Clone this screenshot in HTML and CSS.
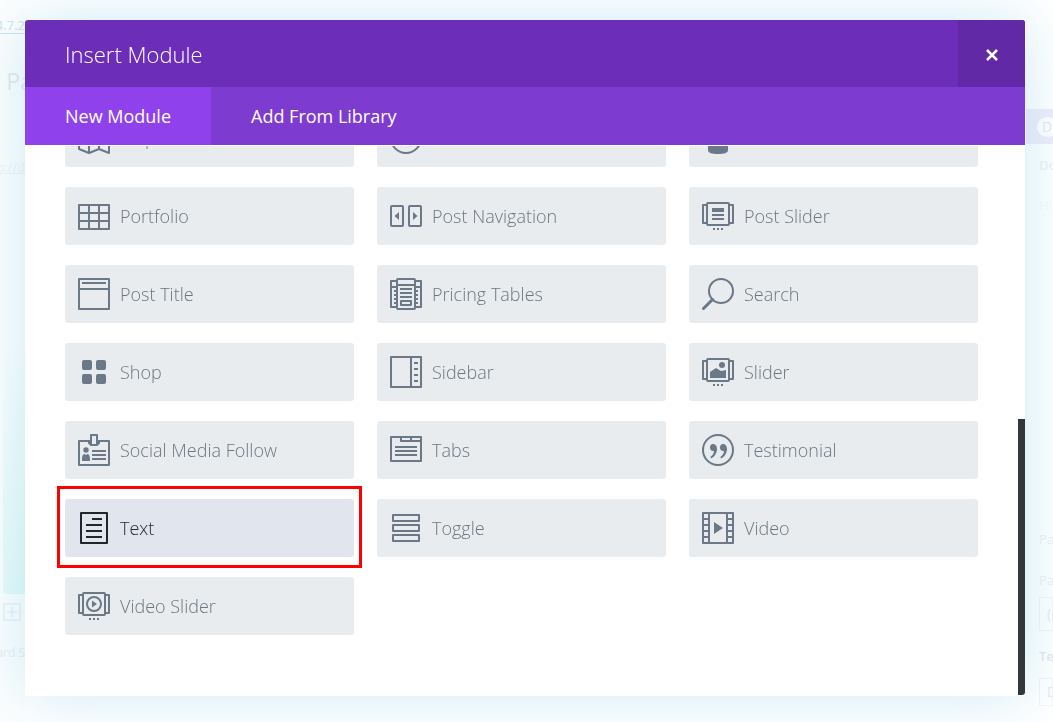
FILE: index.html
```html
<!DOCTYPE html>
<html lang="en">
<head>
<meta charset="utf-8">
<title>Insert Module</title>
<link rel="stylesheet" href="styles.css">
</head>
<body>
<div class="page" aria-hidden="true">
  <div class="page-left">
    <span class="version">4.7.2</span>
    <span class="page-heading">r Pa</span>
    <span class="permalink">p://d</span>
    <div class="builder"></div>
    <svg class="add" viewBox="0 0 18 18"><path d="M1 1h16v16H1zM9 4v10M4 9h10"/></svg>
    <span class="standard">ard S</span>
  </div>
  <div class="page-right">
    <div class="divi-bar"><span class="divi-logo">D</span></div>
    <span class="side-text strong doc">Do</span>
    <span class="side-text hint">Hi</span>
    <span class="side-text attributes">Pa</span>
    <span class="side-text parent">Pa</span>
    <span class="side-box">(n</span>
    <span class="side-text strong template">Te</span>
    <span class="side-box">D</span>
  </div>
</div>

<section class="modal" role="dialog" aria-labelledby="modal-title">
  <header class="modal-header">
    <h1 class="modal-title" id="modal-title">Insert Module</h1>
    <button class="close" type="button" aria-label="Close">
      <svg class="close-icon" viewBox="0 0 12 12"><path d="M1 1l10 10M11 1L1 11"/></svg>
    </button>
  </header>
  <nav class="tabs">
    <button class="tab tab-active" type="button">New Module</button>
    <button class="tab" type="button">Add From Library</button>
  </nav>
  <div class="modal-body">
    <div class="modules">
      <button class="module" type="button"><svg class="icon" viewBox="0 0 32 32"><path d="M1 1l10 4 10-4 10 4v26l-10-4-10 4-10-4zM11 5v26M21 1v26"/></svg>Map</button>
      <button class="module" type="button"><svg class="icon" viewBox="0 0 32 32"><circle cx="16" cy="16" r="15"/><path d="M16 6v10h6"/></svg>Number Counter</button>
      <button class="module" type="button"><svg class="icon" viewBox="0 0 32 32"><circle class="fill" cx="16" cy="7" r="7"/><path class="fill" d="M6 24c0-5 4-8 10-8s10 3 10 8v4c0 3-4 4-10 4s-10-1-10-4z"/></svg>Person</button>

      <button class="module" type="button"><svg class="icon" viewBox="0 0 32 32"><path d="M1 5h30v24H1zM11 5v24M21 5v24M1 13h30M1 21h30"/></svg>Portfolio</button>
      <button class="module" type="button"><svg class="icon" viewBox="0 0 32 32"><rect x="1" y="6" width="12" height="20" rx="1"/><rect x="19" y="6" width="12" height="20" rx="1"/><path class="fill" d="M9 12v8l-4.500-4zM23 12v8l4.500-4z"/></svg>Post Navigation</button>
      <button class="module" type="button"><svg class="icon" viewBox="0 0 32 32"><rect x="5" y="3" width="22" height="22" rx="1"/><path d="M5 5H1v18h4M27 5h4v18h-4M10 15h12M10 19h12"/><path class="fill" d="M10 8h12v4H10zM11 28h2v2h-2zM15 28h2v2h-2zM19 28h2v2h-2z"/></svg>Post Slider</button>

      <button class="module" type="button"><svg class="icon" viewBox="0 0 32 32"><path d="M1 1h30v30H1zM1 11h30M4 5h24"/></svg>Post Title</button>
      <button class="module" type="button"><svg class="icon" viewBox="0 0 32 32"><rect x="7" y="1" width="18" height="30" rx="1"/><path d="M7 3H1v26h6M25 3h6v26h-6M1 9h6M25 9h6M7 7h18M10 11h12M10 15h12M10 19h12M11 23h10v4H11zM4 13h3M4 17h3M4 21h3M4 25h3M25 13h3M25 17h3M25 21h3M25 25h3"/></svg>Pricing Tables</button>
      <button class="module" type="button"><svg class="icon" viewBox="0 0 32 32"><circle cx="19" cy="13" r="12"/><path class="thick" d="M1.500 30.500l9-9"/></svg>Search</button>

      <button class="module" type="button"><svg class="icon" viewBox="0 0 32 32"><g class="fill"><rect x="4" y="4" width="10" height="10" rx="2"/><rect x="18" y="4" width="10" height="10" rx="2"/><rect x="4" y="18" width="10" height="10" rx="2"/><rect x="18" y="18" width="10" height="10" rx="2"/></g></svg>Shop</button>
      <button class="module" type="button"><svg class="icon" viewBox="0 0 32 32"><path d="M1 1h30v30H1zM21 1v30M24 7h4M24 13h4M24 19h4M24 25h4"/></svg>Sidebar</button>
      <button class="module" type="button"><svg class="icon" viewBox="0 0 32 32"><rect x="5" y="3" width="22" height="22" rx="1"/><path d="M5 5H1v18h4M27 5h4v18h-4"/><circle class="fill" cx="20" cy="9" r="3"/><path class="fill" d="M8 22v-6l6-4 5 3 5-1v8zM11 28h2v2h-2zM15 28h2v2h-2zM19 28h2v2h-2z"/></svg>Slider</button>

      <button class="module" type="button"><svg class="icon" viewBox="0 0 32 32"><path d="M11 7H1v24h30V7H21M14 17h14M14 21h14M14 25h14M13 1h6v10h-6zM11 6v3l2 2M21 6v3l-2 2"/><circle class="fill" cx="8" cy="16" r="2.700"/><path class="fill" d="M4 27v-2c0-3 1-5 2.500-5L8 21l1.500-1C11 20 12 22 12 25v2z"/></svg>Social Media Follow</button>
      <button class="module" type="button"><svg class="icon" viewBox="0 0 32 32"><path d="M1 3h30v24H1zM11 3v4h20M21 3v4M5 13h22M5 17h22M5 21h22"/></svg>Tabs</button>
      <button class="module" type="button"><svg class="icon" viewBox="0 0 32 32"><circle cx="16" cy="16" r="15"/><path class="fill" d="M11 10c2.500 0 4 2 4 5 0 4-2.500 8-6 9.500l-.7-1.500c2.200-1.500 3.500-3.500 3.700-6-2.500.5-4-1-4-3.500 0-2 1.200-3.500 3-3.500zM21 10c2.500 0 4 2 4 5 0 4-2.500 8-6 9.500l-.7-1.500c2.200-1.500 3.500-3.500 3.700-6-2.500.5-4-1-4-3.500 0-2 1.200-3.500 3-3.500z"/></svg>Testimonial</button>

      <button class="module module-selected" type="button"><svg class="icon" viewBox="0 0 32 32"><path d="M3 1h26v30H3zM14 7h10M8 13h16M8 19h16M8 25h16"/></svg>Text</button>
      <button class="module" type="button"><svg class="icon" viewBox="0 0 32 32"><path d="M3 3h26v6H3zM3 13h26v6H3zM3 23h26v6H3z"/></svg>Toggle</button>
      <button class="module" type="button"><svg class="icon" viewBox="0 0 32 32"><path d="M1 1h30v30H1zM7 1v30M25 1v30M1 7h6M1 13h6M1 19h6M1 25h6M25 7h6M25 13h6M25 19h6M25 25h6"/><path class="fill" d="M12 10v12l9-6z"/></svg>Video</button>

      <button class="module" type="button"><svg class="icon" viewBox="0 0 32 32"><rect x="5" y="3" width="22" height="22" rx="1"/><path d="M5 5H1v18h4M27 5h4v18h-4"/><circle cx="16" cy="14" r="7"/><path class="fill" d="M14 10.500v7l5-3.500zM11 28h2v2h-2zM15 28h2v2h-2zM19 28h2v2h-2z"/></svg>Video Slider</button>
    </div>
  </div>
  <div class="scroll-thumb"></div>
</section>
</body>
</html>
```
FILE: styles.css
```css
* {
  box-sizing: border-box;
}

body {
  margin: 0;
  height: 100vh;
  overflow: hidden;
  background: #fff;
  font-family: "Open Sans", "Noto Sans", sans-serif;
}

button {
  border: 0;
  margin: 0;
  font-family: inherit;
  text-align: left;
  cursor: pointer;
}

/* Dimmed editor page behind the dialog */
.page {
  display: flex;
  justify-content: space-between;
  height: 100vh;
  overflow: hidden;
  color: #edf2f4;
}

.page-left,
.page-right {
  display: flex;
  flex-direction: column;
  white-space: nowrap;
}

.page-left {
  width: 25px;
  align-items: flex-end;
  background: #fdfefe;
}

.page-right {
  width: 27px;
  padding-top: 109px;
}

.version {
  margin-top: 17px;
  font-size: 13px;
  line-height: 16px;
  color: #cfe4f0;
  border-bottom: 1px solid #cfe4f0;
}

.page-heading {
  margin: 32px -8px 0 0;
  font-size: 23px;
  line-height: 30px;
  color: #e6ebed;
}

.permalink {
  margin-top: 62px;
  font-size: 13px;
  line-height: 18px;
  color: #f0f5f7;
  text-decoration: underline;
}

.builder {
  width: 22px;
  flex: 0 0 418px;
  border-radius: 0 0 0 3px;
  background: linear-gradient(#fdfefe 40%, #e6faf8);
}

.add {
  width: 18px;
  flex: 0 0 18px;
  margin: 9px 4px 0 0;
  fill: none;
  stroke: #eef4f6;
  stroke-width: 2;
}

.standard {
  margin-top: 23px;
  font-size: 12px;
  line-height: 18px;
  color: #e9eff1;
}

.divi-bar {
  display: flex;
  align-items: center;
  flex: 0 0 35px;
  padding-left: 11px;
  background: #f0edfa;
}

.divi-logo {
  flex: 0 0 20px;
  border-radius: 10px;
  background: #fff;
  font-size: 14px;
  line-height: 20px;
  text-align: center;
  color: #eae8f7;
}

.side-text {
  padding-left: 13px;
  font-size: 13px;
  line-height: 18px;
}

.side-text.strong {
  font-weight: 600;
}

.side-text.doc {
  margin-top: 12px;
  color: #f0f4f5;
}

.side-text.hint {
  margin-top: 22px;
  color: #f7fafb;
}

.side-text.attributes {
  margin-top: 316px;
}

.side-text.parent {
  margin-top: 23px;
}

.side-text.template {
  margin-top: 16px;
  color: #e6ebed;
}

.side-box {
  margin: 8px 0 0 13px;
  padding-left: 7px;
  border: 1px solid #f3f6f8;
  font-size: 14px;
  line-height: 32px;
  color: #e8edef;
}

.side-text.template + .side-box {
  margin-top: 13px;
  line-height: 26px;
}

/* Dialog */
.modal {
  position: fixed;
  inset: 20px 28px 26px 25px;
  display: flex;
  flex-direction: column;
  border-radius: 3px;
  background: #fff;
  box-shadow: 0 0 60px rgba(0, 150, 200, 0.2);
}

.modal-header {
  display: flex;
  justify-content: space-between;
  flex: 0 0 67px;
  border-radius: 3px 3px 0 0;
  background: #6c2eb9;
  overflow: hidden;
}

.modal-title {
  margin: 0;
  padding-left: 40px;
  font-size: 22px;
  font-weight: 300;
  line-height: 68px;
  color: #fff;
}

.close {
  display: flex;
  align-items: center;
  justify-content: center;
  width: 67px;
  padding: 2px 0 0;
  background: #6129a6;
}

.close-icon {
  width: 12px;
  height: 12px;
  fill: none;
  stroke: #fff;
  stroke-width: 2.500;
}

.tabs {
  display: flex;
  flex: 0 0 58px;
  background: #7e3bd0;
}

.tab {
  padding: 0 40px;
  background: transparent;
  font-size: 18px;
  font-weight: 500;
  color: #fff;
}

.tab-active {
  background: #8f42ec;
}

.modal-body {
  display: flex;
  flex-direction: column;
  justify-content: flex-end;
  flex: 1;
  min-height: 0;
  padding: 0 47px 61px 40px;
  border-top: 1px solid #fff;
  overflow: hidden;
}

.modules {
  display: grid;
  grid-template-columns: repeat(3, 1fr);
  gap: 20px 23px;
}

.module {
  position: relative;
  display: flex;
  align-items: center;
  gap: 10px;
  height: 58px;
  padding: 0 13px;
  border-radius: 3px;
  background: #e8ecef;
  font-size: 18px;
  font-weight: 300;
  color: #6b7780;
}

.module-selected {
  background: #e1e5ed;
  color: #26292e;
}

.module-selected::after {
  content: "";
  position: absolute;
  inset: -13px -8px -11px;
  border: 3px solid #f00;
}

.icon {
  flex: 0 0 32px;
  height: 32px;
  fill: none;
  stroke: #6b7887;
  stroke-width: 2;
  stroke-linejoin: round;
}

.icon .fill {
  fill: #6b7887;
  stroke: none;
}

.icon .thick {
  stroke-width: 3;
  stroke-linecap: round;
}

.module-selected .icon {
  stroke: #22262b;
}

.scroll-thumb {
  position: absolute;
  right: 0;
  bottom: 1px;
  width: 7px;
  height: 276px;
  border-radius: 0 0 3px 0;
  background: #32373c;
}
```
